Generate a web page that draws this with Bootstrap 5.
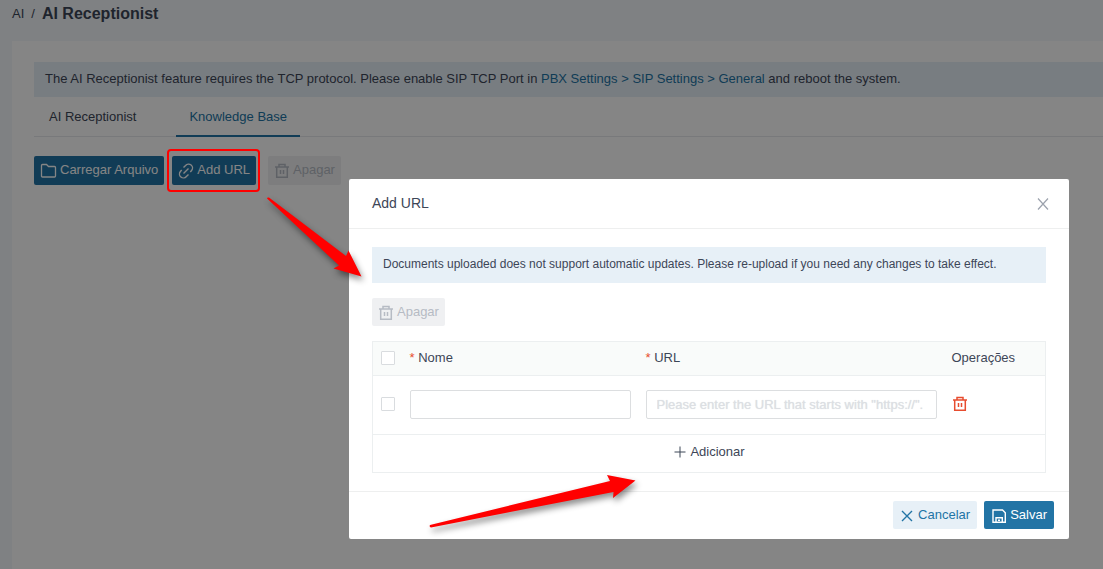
<!DOCTYPE html>
<html lang="pt-BR">
<head>
<meta charset="utf-8">
<meta name="viewport" content="width=device-width, initial-scale=1">
<title>AI Receptionist</title>
<link href="https://cdn.jsdelivr.net/npm/bootstrap@5.3.0/dist/css/bootstrap.min.css" rel="stylesheet">
<style>
body{font-family:"Liberation Sans",Arial,sans-serif;font-size:13px;line-height:20px;color:#3d4657;background:#f4f7fb}
a{color:#2274a5;text-decoration:none}
.crumbs{height:41px;padding:4px 12px;gap:7px}
.crumbs h1{font-size:16px;line-height:20px;font-weight:700;margin:0}
.panel{margin-left:12px;padding:21px 0 0 22px;background:#fff}
.notice{background:#e7f0f7;padding:7px 11px 9px;border:0;border-radius:0;margin:0;color:inherit}
.page-notice{padding-bottom:8px}
.dialog .notice{font-size:12px}
.tabs{border-bottom:1px solid #e6e9ec;height:40px;gap:27px;padding-left:2px}
.tabs .nav-link{color:inherit;padding:10px 13px 8px;height:40px;border-bottom:2px solid transparent}
.tabs .nav-link.active{color:#2274a5;border-color:#2274a5}
.act{--bs-btn-padding-x:6px;--bs-btn-padding-y:3px;--bs-btn-font-size:13px;--bs-btn-line-height:20px;--bs-btn-border-radius:2px;--bs-btn-disabled-opacity:1;height:28px;display:inline-flex;align-items:center;gap:3px;border:0;white-space:nowrap}
.act svg{margin-top:2px}
.tools{padding-top:19px;gap:8px}
.tools .act{height:29px;padding-bottom:5px}
.act.main,.act.main:hover{background:#2274a5;color:#fff}
.act.soft,.act.soft:hover{background:#e7f0f7;color:#2274a5}
.act.off:disabled{background:#eff0f2;color:#b6bbc4}
svg{flex:none;fill:none;stroke:currentColor}
.shade{background:rgba(0,0,0,.48);padding:179px 34px 30px 16px;z-index:5}
.dialog{width:720px;background:#fff;border-radius:2px}
.dialog header{height:50px;padding:0 19px 0 23px;border-bottom:1px solid #eeefef}
.dialog h2{font-size:14px;line-height:20px;margin:0;padding-bottom:2px;font-weight:400}
.dialog .inner{padding:18px 23px}
.dialog .inner>.act{display:flex;margin:15px 0}
.dialog footer{padding:9px 15px 10px;border-top:1px solid #eeefef;gap:7px}
.dialog footer .act{--bs-btn-padding-x:7px}
.plain{border:0;background:none;padding:0;color:inherit;display:inline-flex;align-items:center}
.plain.shut{color:#9ca2ad}
.urls{table-layout:fixed;width:100%;border:1px solid #eceff0}
.urls th,.urls td{font-weight:400;padding:0 7px 2px 8px;border-bottom:1px solid #eceff0;text-align:left;vertical-align:middle}
.urls thead{background:#f9fbfa}
.urls th{height:34px}
.urls .entry td{height:59px}
.urls .more td{height:38px;text-align:center}
.c-check{width:29px}.c-name{width:236px}.c-op{width:102px}
.req{color:#e74c2f}
.urls .form-check-input{margin:0;width:14px;height:14px;border:1px solid #d9dcdf;border-radius:1px;display:block}
.urls .form-control{height:29px;padding:3px 9px 3px 10px;font-size:13px;line-height:20px;border:1px solid #dcdee0;border-radius:2px}
.urls .form-control::placeholder{color:#dcdfe3;text-shadow:0 0 1px #dcdfe3}
.marks{z-index:8;pointer-events:none;overflow:visible}
.arrows{filter:drop-shadow(2px 4px 3px rgba(0,0,0,.45))}
</style>
</head>
<body class="position-relative min-vh-100 d-flex flex-column overflow-hidden">
<nav class="crumbs d-flex" aria-label="breadcrumb"><a href="#" class="text-reset">AI</a><span>/</span><h1>AI Receptionist</h1></nav>
<main class="panel flex-grow-1">
  <div class="alert notice page-notice">The AI Receptionist feature requires the TCP protocol. Please enable SIP TCP Port in <a href="#">PBX Settings &gt; SIP Settings &gt; General</a> and reboot the system.</div>
  <nav class="nav tabs"><a class="nav-link" href="#">AI Receptionist</a><a class="nav-link active" href="#">Knowledge Base</a></nav>
  <div class="tools d-flex">
    <button class="btn act main"><svg width="17" height="16" viewBox="0 0 17 16" stroke-width="1.3"><path d="M1.5 13.5V2.5q0-1 1-1h4l2 2h6q1 0 1 1v8.5q0 1-1 1h-12q-1 0-1-.5z"/></svg>Carregar Arquivo</button>
    <button class="btn act main"><svg width="16" height="16" viewBox="0 0 16 16" stroke-width="1.4"><path d="M5.5 4.5L7.6 2.5a3.9 3.9 0 0 1 6 5L12.3 9M10.5 11.5L8.4 13.5a3.9 3.9 0 0 1-6-5L3.7 7M5.5 10.5l5-5"/></svg>Add URL</button>
    <button class="btn act off ms-1" disabled><svg width="16" height="16" viewBox="0 0 16 16" stroke-width="1.5"><path d="M1 4h14M5 4V1.5h6V4M2.7 4v10.3h10.6V4M6.5 7v4M9.5 7v4"/></svg>Apagar</button>
  </div>
</main>

<div class="shade position-absolute top-0 start-0 w-100 h-100 d-flex justify-content-end align-items-start">
  <section class="dialog" role="dialog" aria-labelledby="dialogTitle">
    <header class="d-flex align-items-center justify-content-between"><h2 id="dialogTitle">Add URL</h2><button class="plain shut" aria-label="Fechar"><svg width="14" height="14" viewBox="0 0 14 14" stroke-width="1.2"><path d="M2 1.5l10 11M12 1.5l-10 11"/></svg></button></header>
    <div class="inner">
      <div class="alert notice">Documents uploaded does not support automatic updates. Please re-upload if you need any changes to take effect.</div>
      <button class="btn act off" disabled><svg width="16" height="16" viewBox="0 0 16 16" stroke-width="1.5"><path d="M1 4h14M5 4V1.5h6V4M2.7 4v10.3h10.6V4M6.5 7v4M9.5 7v4"/></svg>Apagar</button>
      <table class="urls">
        <colgroup><col class="c-check"><col class="c-name"><col><col class="c-op"></colgroup>
        <thead><tr><th><input class="form-check-input" type="checkbox" aria-label="Selecionar tudo"></th><th><span class="req">*</span> <label for="nome">Nome</label></th><th><span class="req">*</span> <label for="url">URL</label></th><th>Operações</th></tr></thead>
        <tbody>
          <tr class="entry"><td><input class="form-check-input" type="checkbox" aria-label="Selecionar linha"></td><td><input class="form-control" id="nome" type="text"></td><td><input class="form-control" id="url" type="text" placeholder="Please enter the URL that starts with &quot;https://&quot;."></td><td><button class="plain req d-flex" aria-label="Apagar linha"><svg width="16" height="16" viewBox="0 0 16 16" stroke-width="1.5"><path d="M1 4h14M5 4V1.5h6V4M2.7 4v10.3h10.6V4M6.5 7v4M9.5 7v4"/></svg></button></td></tr>
          <tr class="more"><td colspan="4"><button class="plain gap-1"><svg width="12" height="12" viewBox="0 0 12 12"><path d="M6 .5v11M.5 6h11"/></svg>Adicionar</button></td></tr>
        </tbody>
      </table>
    </div>
    <footer class="d-flex justify-content-end">
      <button class="btn act soft gap-1"><svg width="14" height="14" viewBox="0 0 14 14" stroke-width="1.4"><path d="M2 2l10 10M12 2L2 12"/></svg>Cancelar</button>
      <button class="btn act main"><svg width="16" height="16" viewBox="0 0 16 16" stroke-width="1.4"><path d="M2 2h9.5L14.3 4.8v9.5H2zM5 14V9.7h6.3V14M7 12.2h2"/></svg>Salvar</button>
    </footer>
  </section>
</div>

<!-- Callouts over the page and the dialog -->
<svg class="marks arrows position-absolute top-0 start-0" width="1103" height="569" viewBox="0 0 1103 569" aria-hidden="true">
  <g fill="#f00" stroke="none"><path d="M267 198.5Q267 197 269 197.5L346 256L348.5 250.5L361.5 276.5L333.5 268.5L339 265.5Z"/><path d="M430 525L610 481L607 475L635.5 480.5L613 498L613.5 492L431 527.5Q429 527 430 525Z"/></g>
</svg>
<svg class="marks position-absolute top-0 start-0" width="1103" height="569" viewBox="0 0 1103 569" aria-hidden="true"><rect x="168" y="150" width="91" height="41" rx="3" stroke="#f00" stroke-width="2"/></svg>
<script src="https://cdn.jsdelivr.net/npm/bootstrap@5.3.0/dist/js/bootstrap.bundle.min.js"></script>
</body>
</html>
